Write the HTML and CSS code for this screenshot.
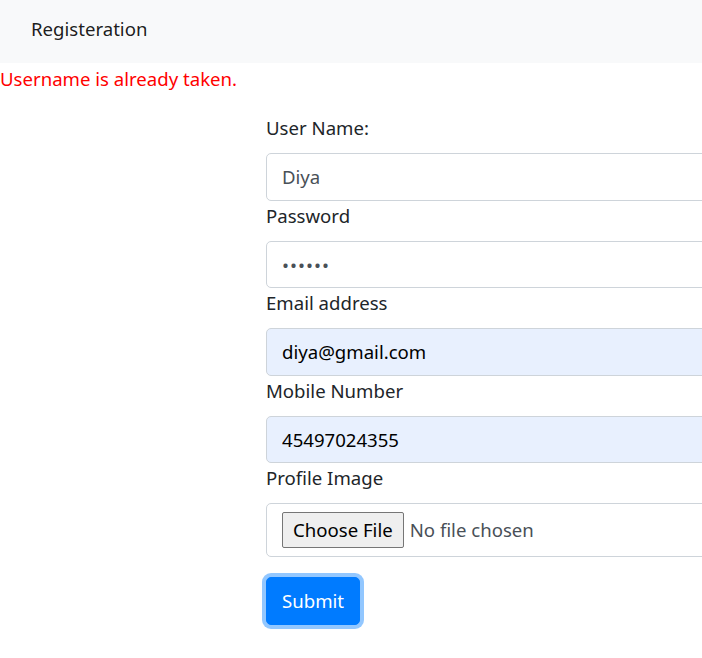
FILE: index.html
```html
<!DOCTYPE html>
<html lang="en">
<head>
<meta charset="utf-8">
<title>Registeration</title>
<link rel="stylesheet" href="styles.css">
</head>
<body>
<div class="page">
<nav class="navbar"><span class="brand">Registeration</span></nav>
<div class="error">Username is already taken.</div>
<form class="reg-form">
  <label class="label" for="un">User Name:</label>
  <input class="field" id="un" type="text" value="Diya">
  <label class="label" for="pw">Password</label>
  <input class="field" id="pw" type="password" value="diya12">
  <label class="label" for="em">Email address</label>
  <input class="field autofill" id="em" type="email" value="diya@gmail.com">
  <label class="label" for="mn">Mobile Number</label>
  <input class="field autofill" id="mn" type="text" value="45497024355">
  <label class="label" for="pi">Profile Image</label>
  <div class="file-group">
    <div class="field file-field"><input class="file-input" id="pi" type="file"></div>
  </div>
  <button class="submit" type="button">Submit</button>
</form>
</div>
</body>
</html>
```
FILE: styles.css
```css
html, body {
  margin: 0;
  padding: 0;
  background: #fff;
}
body {
  font-family: "Segoe UI", "Noto Sans", "Open Sans", sans-serif;
  font-size: 18.6px;
  line-height: 30px;
  color: #212529;
}
.page {
  width: 702px;
  height: 658px;
  overflow: hidden;
}
.navbar {
  height: 63px;
  box-sizing: border-box;
  padding: 14px 0 0 31px;
  background: #f8f9fa;
}
.brand {
  color: rgba(0, 0, 0, 0.9);
}
.error {
  color: #ff0000;
  padding-top: 1px;
  margin-bottom: 19px;
}
.reg-form {
  margin-left: 266px;
  width: 640px;
  display: flex;
  flex-direction: column;
  align-items: flex-start;
}
.label {
  display: block;
  margin-bottom: 10px;
}
.field {
  box-sizing: border-box;
  width: 100%;
  height: 47.5px;
  padding: 7.5px 15px;
  font: inherit;
  color: #495057;
  background: #fff;
  border: 1px solid #ced4da;
  border-radius: 5px;
  outline: none;
  margin: 0;
}
.field[type="password"] {
  letter-spacing: 1px;
}
.autofill {
  background: #e8f0fe;
  color: #000;
}
.file-group {
  width: 100%;
  margin-bottom: 20px;
}
.file-field {
  height: 54px;
  padding: 7.5px 15px;
  display: flex;
  align-items: center;
}
.file-input {
  font: inherit;
  color: #495057;
  margin: 0;
}
.file-input::file-selector-button {
  font: inherit;
  color: #000;
  height: 36px;
  padding: 0 10px;
  margin: 0 6px 0 0;
  background: #efefef;
  border: 1px solid #767676;
  border-radius: 2px;
}
.submit {
  font: inherit;
  color: #fff;
  background: #007bff;
  border: 1px solid #007bff;
  border-radius: 5px;
  height: 47.5px;
  padding: 7.5px 15px;
  box-shadow: 0 0 0 4px rgba(38, 143, 255, 0.5);
}
```
